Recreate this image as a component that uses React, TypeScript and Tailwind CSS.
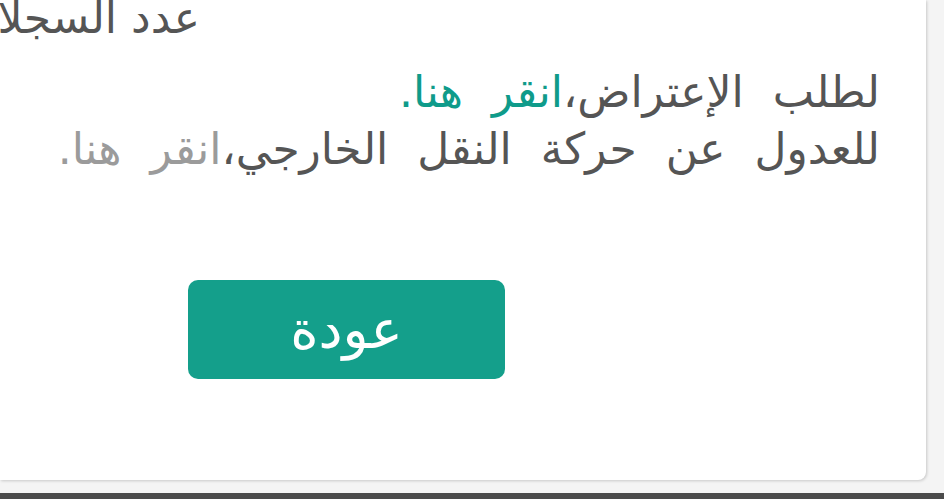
export default function App() {
  return (
    <div className="w-[944px] h-[499px] overflow-hidden bg-[#f4f4f4] flex flex-col" style={{ fontFamily: '"DejaVu Sans", sans-serif' }}>
      {/* Card */}
      <div className="w-[926px] h-[480px] shrink-0 bg-white rounded-br-lg shadow-[1px_1px_3px_rgba(0,0,0,0.18)] overflow-hidden flex flex-col">
        {/* Clipped header */}
        <div className="h-[44px] flex">
          <div dir="rtl" className="w-[200px] whitespace-nowrap text-[44px] leading-none text-[#555555] -mt-[4px]">
            عدد السجلات
          </div>
        </div>

        {/* Info lines */}
        <div dir="rtl" className="pr-[46px] pt-[19px] text-[44px] leading-[57px] [word-spacing:15px] text-[#555555] whitespace-nowrap">
          <p>
            لطلب الإعتراض،<span className="text-[#0f9b8a]">انقر هنا.</span>
          </p>
          <p>
            للعدول عن حركة النقل الخارجي،<span className="text-[#9b9b9b]">انقر هنا.</span>
          </p>
        </div>

        {/* Back button */}
        <div className="pl-[188px] pt-[103px] flex">
          <button className="w-[317px] h-[99px] rounded-[10px] bg-[#149f8b] text-white text-[54px] flex items-center justify-center">
            عودة
          </button>
        </div>
      </div>

      <div className="flex-1" />
      <div className="h-[6px] bg-[#4b4b4b]" />
    </div>
  )
}
